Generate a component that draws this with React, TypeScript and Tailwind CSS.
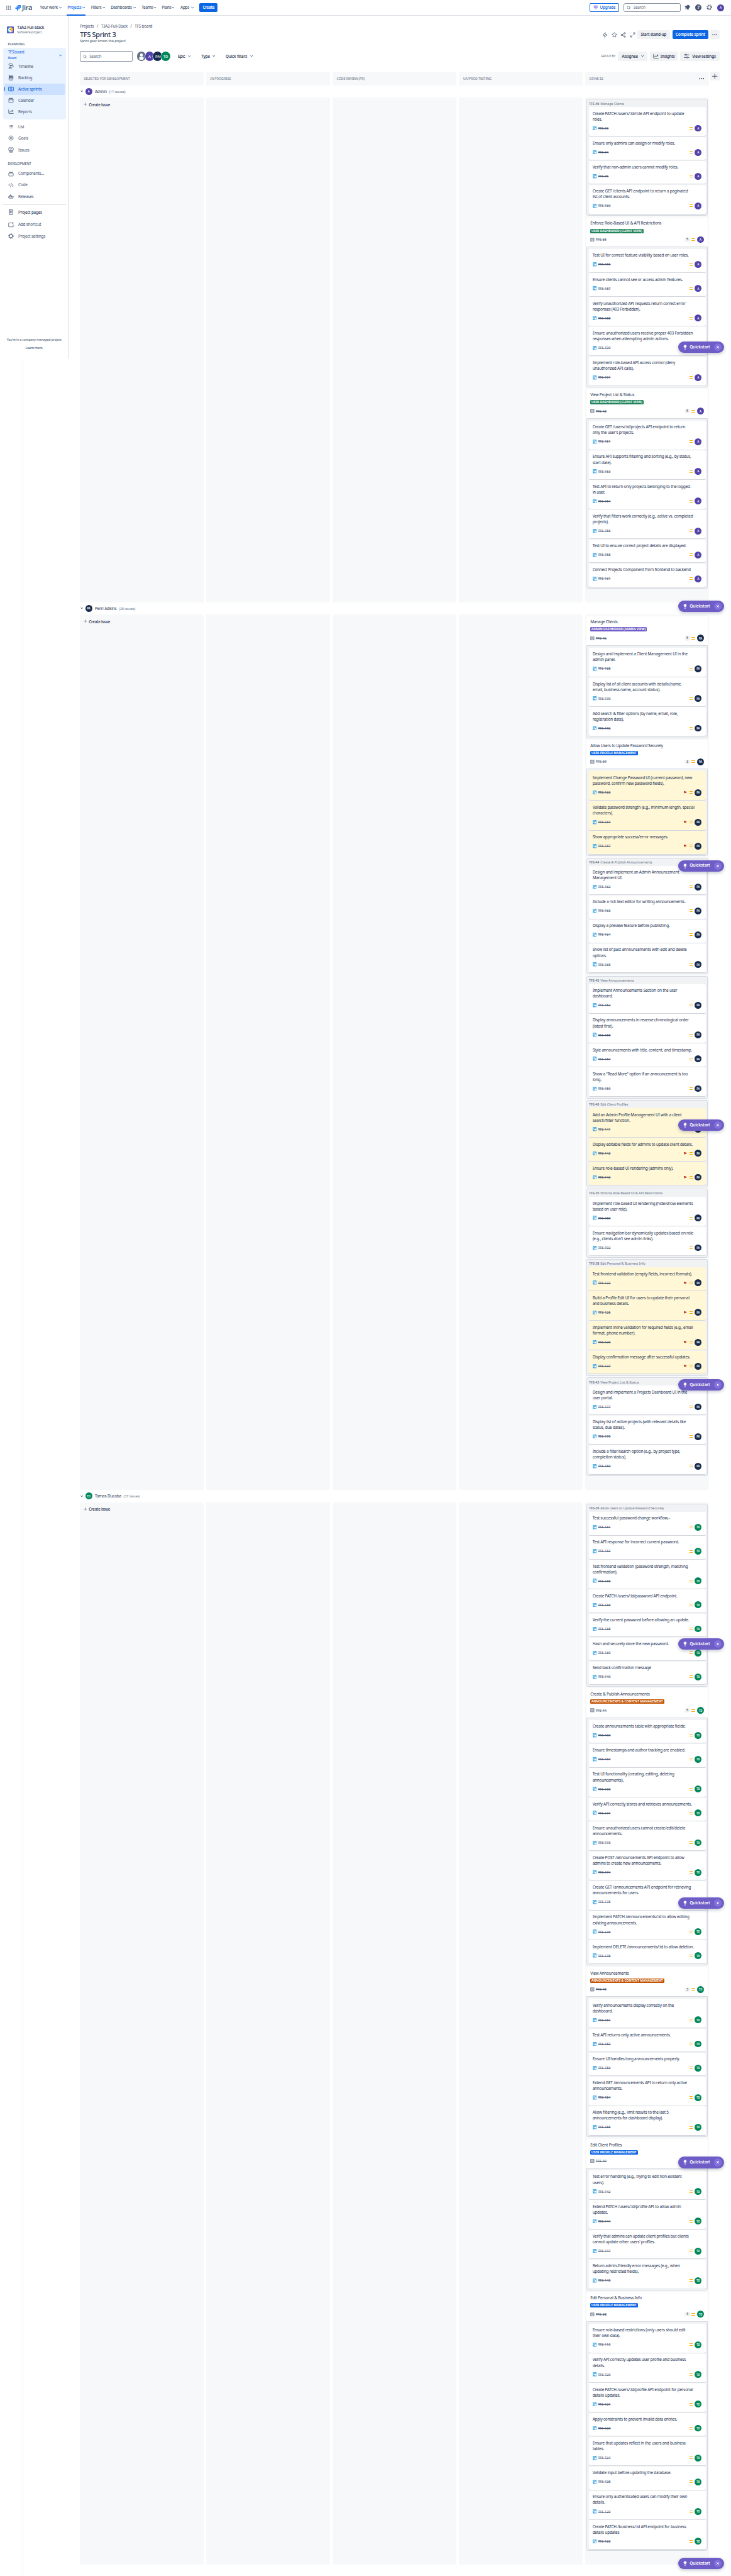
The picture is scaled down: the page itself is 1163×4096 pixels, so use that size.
import React from "react";
import { Bell, Calendar, Search, Star, Zap, Share2, Maximize2, Lightbulb } from "lucide-react";

type Person = "A" | "PA" | "TD";
type Item = [id: number, text: string];
type Group = {
  id: number;
  title: string;
  parent?: { badge: string; tone: "green" | "purple" | "blue" | "orange"; points: number };
  flagged?: boolean;
  items: Item[];
};

const adminGroups: Group[] = [
  {
    id: 46,
    title: "Manage Clients",
    items: [
      [93, "Create PATCH /users/:id/role API endpoint to update\nroles."],
      [94, "Ensure only admins can assign or modify roles."],
      [96, "Verify that non-admin users cannot modify roles."],
      [160, "Create GET /clients API endpoint to return a paginated\nlist of client accounts."],
    ],
  },
  {
    id: 35,
    title: "Enforce Role-Based UI & API Restrictions",
    parent: { badge: "USER DASHBOARD (CLIENT VIEW)", tone: "green", points: 5 },
    items: [
      [186, "Test UI for correct feature visibility based on user roles."],
      [187, "Ensure clients cannot see or access admin features."],
      [188, "Verify unauthorized API requests return correct error\nresponses (403 Forbidden)."],
      [190, "Ensure unauthorized users receive proper 403 Forbidden\nresponses when attempting admin actions."],
      [191, "Implement role-based API access control (deny\nunauthorized API calls)."],
    ],
  },
  {
    id: 43,
    title: "View Project List & Status",
    parent: { badge: "USER DASHBOARD (CLIENT VIEW)", tone: "green", points: 5 },
    items: [
      [151, "Create GET /users/:id/projects API endpoint to return\nonly the user's projects."],
      [153, "Ensure API supports filtering and sorting (e.g., by status,\nstart date)."],
      [154, "Test API to return only projects belonging to the logged-\nin user."],
      [156, "Verify that filters work correctly (e.g., active vs. completed\nprojects)."],
      [158, "Test UI to ensure correct project details are displayed."],
      [161, "Connect Projects Component from frontend to backend"],
    ],
  },
];

const paGroups: Group[] = [
  {
    id: 46,
    title: "Manage Clients",
    parent: { badge: "ADMIN DASHBOARD (ADMIN VIEW)", tone: "purple", points: 5 },
    items: [
      [168, "Design and implement a Client Management UI in the\nadmin panel."],
      [170, "Display list of all client accounts with details (name,\nemail, business name, account status)."],
      [172, "Add search & filter options (by name, email, role,\nregistration date)."],
    ],
  },
  {
    id: 39,
    title: "Allow Users to Update Password Securely",
    parent: { badge: "USER PROFILE MANAGEMENT", tone: "blue", points: 3 },
    flagged: true,
    items: [
      [133, "Implement Change Password UI (current password, new\npassword, confirm new password fields)."],
      [134, "Validate password strength (e.g., minimum length, special\ncharacters)."],
      [137, "Show appropriate success/error messages."],
    ],
  },
  {
    id: 44,
    title: "Create & Publish Announcements",
    items: [
      [162, "Design and implement an Admin Announcement\nManagement UI."],
      [163, "Include a rich text editor for writing announcements."],
      [164, "Display a preview feature before publishing."],
      [165, "Show list of past announcements with edit and delete\noptions."],
    ],
  },
  {
    id: 45,
    title: "View Announcements",
    items: [
      [152, "Implement Announcements Section on the user\ndashboard."],
      [155, "Display announcements in reverse chronological order\n(latest first)."],
      [157, "Style announcements with title, content, and timestamp."],
      [159, "Show a \"Read More\" option if an announcement is too\nlong."],
    ],
  },
  {
    id: 40,
    title: "Edit Client Profiles",
    flagged: true,
    items: [
      [141, "Add an Admin Profile Management UI with a client\nsearch/filter function."],
      [143, "Display editable fields for admins to update client details."],
      [146, "Ensure role-based UI rendering (admins only)."],
    ],
  },
  {
    id: 35,
    title: "Enforce Role-Based UI & API Restrictions",
    items: [
      [189, "Implement role-based UI rendering (hide/show elements\nbased on user role)."],
      [192, "Ensure navigation bar dynamically updates based on role\n(e.g., clients don't see admin links)."],
    ],
  },
  {
    id: 38,
    title: "Edit Personal & Business Info",
    flagged: true,
    items: [
      [122, "Test frontend validation (empty fields, incorrect formats)."],
      [125, "Build a Profile Edit UI for users to update their personal\nand business details."],
      [126, "Implement inline validation for required fields (e.g., email\nformat, phone number)."],
      [127, "Display confirmation message after successful updates."],
    ],
  },
  {
    id: 43,
    title: "View Project List & Status",
    items: [
      [177, "Design and implement a Projects Dashboard UI in the\nuser portal."],
      [179, "Display list of active projects (with relevant details like\nstatus, due dates)."],
      [180, "Include a filter/search option (e.g., by project type,\ncompletion status)."],
    ],
  },
];

const tdGroups: Group[] = [
  {
    id: 39,
    title: "Allow Users to Update Password Securely",
    items: [
      [131, "Test successful password change workflow.-"],
      [132, "Test API response for incorrect current password."],
      [135, "Test frontend validation (password strength, matching\nconfirmation)."],
      [136, "Create PATCH /users/:id/password API endpoint."],
      [138, "Verify the current password before allowing an update."],
      [139, "Hash and securely store the new password."],
      [140, "Send back confirmation message"],
    ],
  },
  {
    id: 44,
    title: "Create & Publish Announcements",
    parent: { badge: "ANNOUNCEMENTS & CONTENT MANAGEMENT", tone: "orange", points: 5 },
    items: [
      [166, "Create announcements table with appropriate fields:"],
      [167, "Ensure timestamps and author tracking are enabled."],
      [169, "Test UI functionality (creating, editing, deleting\nannouncements)."],
      [171, "Verify API correctly stores and retrieves announcements."],
      [173, "Ensure unauthorized users cannot create/edit/delete\nannouncements."],
      [174, "Create POST /announcements API endpoint to allow\nadmins to create new announcements."],
      [175, "Create GET /announcements API endpoint for retrieving\nannouncements for users."],
      [176, "Implement PATCH /announcements/:id to allow editing\nexisting announcements."],
      [178, "Implement DELETE /announcements/:id to allow deletion."],
    ],
  },
  {
    id: 45,
    title: "View Announcements",
    parent: { badge: "ANNOUNCEMENTS & CONTENT MANAGEMENT", tone: "orange", points: 3 },
    items: [
      [181, "Verify announcements display correctly on the\ndashboard."],
      [182, "Test API returns only active announcements."],
      [183, "Ensure UI handles long announcements properly."],
      [184, "Extend GET /announcements API to return only active\nannouncements."],
      [185, "Allow filtering (e.g., limit results to the last 5\nannouncements for dashboard display)."],
    ],
  },
  {
    id: 40,
    title: "Edit Client Profiles",
    parent: { badge: "USER PROFILE MANAGEMENT", tone: "blue", points: 3 },
    items: [
      [142, "Test error handling (e.g., trying to edit non-existent\nusers)."],
      [144, "Extend PATCH /users/:id/profile API to allow admin\nupdates."],
      [147, "Verify that admins can update client profiles but clients\ncannot update other users' profiles."],
      [149, "Return admin-friendly error messages (e.g., when\nupdating restricted fields)."],
    ],
  },
  {
    id: 38,
    title: "Edit Personal & Business Info",
    parent: { badge: "USER PROFILE MANAGEMENT", tone: "blue", points: 3 },
    items: [
      [119, "Ensure role-based restrictions (only users should edit\ntheir own data)."],
      [120, "Verify API correctly updates user profile and business\ndetails."],
      [121, "Create PATCH /users/:id/profile API endpoint for personal\ndetails updates."],
      [123, "Apply constraints to prevent invalid data entries."],
      [124, "Ensure that updates reflect in the users and business\ntables."],
      [128, "Validate input before updating the database."],
      [129, "Ensure only authenticated users can modify their own\ndetails."],
      [130, "Create PATCH /business/:id API endpoint for business\ndetails updates"],
    ],
  },
];

const personColor: Record<Person, string> = {
  A: "bg-[#5243aa]",
  PA: "bg-[#172b4d]",
  TD: "bg-[#00875a]",
};

const badgeColor = {
  green: "bg-[#1f845a]",
  purple: "bg-[#6e5dc6]",
  blue: "bg-[#0c66e4]",
  orange: "bg-[#c25100]",
};

function Avatar({ who }: { who: Person }) {
  return (
    <span
      className={`flex size-[10.9px] shrink-0 items-center justify-center rounded-full text-[4.3px] leading-none font-semibold text-white ${personColor[who]}`}
    >
      {who}
    </span>
  );
}

function Chevron({ className = "" }: { className?: string }) {
  return (
    <svg viewBox="0 0 8 8" className={`size-[4.4px] shrink-0 ${className}`} fill="none" stroke="currentColor" strokeWidth="1.8" strokeLinecap="round" strokeLinejoin="round">
      <path d="M1.2 2.6 4 5.3l2.8-2.7" />
    </svg>
  );
}

function Dots({ className = "" }: { className?: string }) {
  return (
    <svg viewBox="0 0 14 4" className={`h-[2.4px] w-[8.4px] ${className}`} fill="currentColor">
      <circle cx="2" cy="2" r="1.6" />
      <circle cx="7" cy="2" r="1.6" />
      <circle cx="12" cy="2" r="1.6" />
    </svg>
  );
}

function Priority() {
  return (
    <span className="flex w-[5.5px] flex-col gap-[2px]">
      <i className="h-[1px] bg-[#ffab00]" />
      <i className="h-[1px] bg-[#ffab00]" />
    </span>
  );
}

function SubtaskIcon() {
  return (
    <svg viewBox="0 0 16 16" className="size-[6.6px] shrink-0">
      <rect width="16" height="16" rx="2" fill="#4bade8" />
      <rect x="3.5" y="3.5" width="6" height="6" rx="1" fill="none" stroke="#fff" strokeWidth="1.3" />
      <rect x="7" y="7" width="6" height="6" rx="1" fill="#fff" />
    </svg>
  );
}

function StoryIcon() {
  return (
    <svg viewBox="0 0 16 16" className="size-[6.6px] shrink-0">
      <rect width="16" height="16" rx="2" fill="#97a0af" />
      <circle cx="8" cy="8" r="3.2" fill="none" stroke="#fff" strokeWidth="1.8" />
    </svg>
  );
}

function Card({ item, who, flagged }: { item: Item; who: Person; flagged?: boolean }) {
  const tall = item[1].includes("\n");
  return (
    <div
      className={`mb-[1.43px] rounded-[2px] px-[5.6px] pt-[5.4px] shadow-[0_0.6px_0.3px_#091e4240] ${tall ? "h-[45.8px]" : "h-[36.71px]"} ${flagged ? "bg-[#fff7d6]" : "bg-white"}`}
    >
      <p className="text-[6.36px] leading-[9.08px] tracking-[-0.03em] whitespace-pre text-[#172b4d]">{item[1]}</p>
      <div className="mt-[4.6px] flex h-[10.9px] items-center">
        <SubtaskIcon />
        <span className="ml-[2.2px] text-[5.45px] text-[#44546f] line-through decoration-[0.6px]">TFS-{item[0]}</span>
        <span className="ml-auto flex items-center">
          {flagged && (
            <svg viewBox="0 0 10 10" className="mr-[4.4px] size-[4.2px]" fill="#ca3521">
              <path d="M0 0h4.5v1.2H10L8.8 4 10 7H4.5V5.8H1.6V10H0z" />
            </svg>
          )}
          <Priority />
          <span className="mr-[0.8px] ml-[3.3px]">
            <Avatar who={who} />
          </span>
        </span>
      </div>
    </div>
  );
}

function IssueGroup({ group, who }: { group: Group; who: Person }) {
  const cards = group.items.map((item) => <Card key={item[0]} item={item} who={who} flagged={group.flagged} />);
  if (!group.parent) {
    return (
      <section className="mb-[2.54px] rounded-[3px] border border-[#d5d9e0] bg-[#f1f2f4] px-[2.7px] pb-[1px]">
        <h3 className="flex h-[12.02px] items-center gap-[1.8px] pt-[2px] text-[5.45px] leading-none tracking-[-0.02em] whitespace-pre text-[#626f86]">
          <b className="font-semibold">TFS-{group.id}</b>
          <span>{group.title}</span>
        </h3>
        {cards}
      </section>
    );
  }
  const { badge, tone, points } = group.parent;
  return (
    <section className="mb-[2.54px]">
      <header className="h-[46.2px] rounded-t-[2px] bg-white px-[5.8px] pt-[4.8px]">
        <h3 className="text-[6.36px] leading-[9.1px] tracking-[-0.03em] text-[#172b4d]">{group.title}</h3>
        <div className="mt-[4px] flex">
          <span className={`-ml-[0.3px] flex h-[7px] items-center rounded-[1.5px] px-[2px] text-[5px] leading-none font-bold tracking-[-0.005em] whitespace-nowrap text-white ${badgeColor[tone]}`}>
            {badge}
          </span>
        </div>
        <div className="mt-[5px] flex h-[10.9px] items-center">
          <StoryIcon />
          <span className="ml-[2.2px] text-[5.45px] text-[#44546f] line-through decoration-[0.6px]">TFS-{group.id}</span>
          <span className="ml-auto flex h-[7.3px] w-[8.5px] items-center justify-center rounded-full bg-[#f1f2f4] text-[5.45px] leading-none text-[#172b4d]">
            {points}
          </span>
          <span className="ml-[2.6px]">
            <Priority />
          </span>
          <span className="mr-[0.6px] ml-[3.3px]">
            <Avatar who={who} />
          </span>
        </div>
      </header>
      <div className="rounded-b-[3px] border border-[#d5d9e0] bg-[#f1f2f4] px-[2.7px] pt-[3.2px] pb-[1px]">{cards}</div>
    </section>
  );
}

function Lane({ who, name, count, groups, height }: { who: Person; name: string; count: number; groups: Group[]; height: string }) {
  return (
    <section>
      <header className="flex h-[19.35px] items-center pl-[1.5px]">
        <Chevron className="text-[#44546f]" />
        <span className="ml-[3.2px]">
          <Avatar who={who} />
        </span>
        <span className="ml-[4.4px] text-[6.36px] tracking-[-0.02em] text-[#172b4d]">{name}</span>
        <span className="ml-[3.7px] pt-[1px] text-[5.45px] tracking-[-0.01em] text-[#626f86]">({count} issues)</span>
      </header>
      <div className={`grid grid-cols-5 gap-[3.7px] ${height}`}>
        <div className="rounded-[2px] bg-[#f7f8f9] pt-[6.5px] pl-[6.6px]">
          <button className="flex items-center text-[6.36px] leading-[9px] font-medium tracking-[-0.04em] text-[#172b4d]">
            <svg viewBox="0 0 10 10" className="mr-[2.6px] size-[5.4px]" stroke="#44546f" strokeWidth="1.2">
              <path d="M5 .5v9M.5 5h9" />
            </svg>
            Create issue
          </button>
        </div>
        <div className="rounded-[2px] bg-[#f7f8f9]" />
        <div className="rounded-[2px] bg-[#f7f8f9]" />
        <div className="rounded-[2px] bg-[#f7f8f9]" />
        <div className="rounded-[2px] bg-[#f7f8f9] pt-[2.4px] pr-[2px] pl-[2.4px]">
          {groups.map((g) => (
            <IssueGroup key={g.id} group={g} who={who} />
          ))}
        </div>
      </div>
    </section>
  );
}

const svgLine = { fill: "none", stroke: "currentColor", strokeWidth: 2, strokeLinecap: "round" as const, strokeLinejoin: "round" as const };

function Icon({ name, className = "size-[9px]" }: { name: string; className?: string }) {
  const shapes: Record<string, React.ReactNode> = {
    timeline: (
      <>
        <rect x="3" y="1.5" width="15" height="5.500" rx="2" />
        <rect x="8" y="9.2" width="14" height="5.500" rx="2" />
        <rect x="3" y="17" width="11" height="5.500" rx="2" />
      </>
    ),
    backlog: (
      <>
        <rect x="3.5" y="2" width="16" height="5" rx="1.5" />
        <rect x="3.5" y="7" width="18" height="5" rx="1.5" />
        <rect x="3.5" y="12" width="17" height="5" rx="1.5" />
        <rect x="3.5" y="17" width="16" height="5" rx="1.5" />
      </>
    ),
    board: (
      <>
        <rect x="1.5" y="3.5" width="21" height="17" rx="2" />
        <path d="M8.7 4v16M15.3 4v16" />
      </>
    ),
    reports: <path d="M2 4v14a2 2 0 0 0 2 2h18M6 15l4-5 4 4 6-7m-4-.5h4.5V11" />,
    list: <path d="M5 7h.5M10 7h9M5 12h.5M10 12h9M5 17h.5M10 17h9" />,
    goals: (
      <>
        <circle cx="12" cy="12" r="9.5" />
        <circle cx="12" cy="12" r="3.5" />
      </>
    ),
    issues: (
      <>
        <rect x="2.5" y="2.5" width="19" height="12" rx="1.5" />
        <path d="m9 8 2 2 4-4M4 18h16M6 21.5h12" />
      </>
    ),
    components: (
      <>
        <rect x="2.5" y="8" width="19" height="13" rx="1.5" />
        <path d="M5 8V4h5v4m4 0V4h5v4" />
      </>
    ),
    code: <path d="m7 6-5 5 5 4m10-6 5 5-5 4M14 4l-4 16" />,
    releases: <path d="M2 13h14l2-2h4l-2 8H4zM5 13V9h10v4M8 9V5h4v4" />,
    pages: (
      <>
        <rect x="4" y="2" width="16" height="20" rx="1.5" />
        <path d="M8 7h8M8 11h8M8 15h4" />
      </>
    ),
    shortcut: <path d="M13 3.500H3.500A1.500 1.500 0 0 0 2 5v15.500h19.500V12M19 1.500v6m-3-3h6" />,
    gear: (
      <>
        <circle cx="12" cy="12" r="6.8" strokeWidth="2.4" />
        <circle cx="12" cy="12" r="9.6" strokeWidth="3.2" strokeLinecap="butt" strokeDasharray="3.5 4.04" />
      </>
    ),
  };
  return (
    <svg viewBox="0 0 24 24" className={`shrink-0 ${className}`} {...svgLine}>
      {shapes[name]}
    </svg>
  );
}

function SideItem({ icon, label, dark }: { icon: React.ReactNode; label: string; dark?: boolean }) {
  return (
    <div className={`flex h-[18.15px] items-center gap-[6.6px] pl-[13.4px] text-[6.36px] tracking-[-0.03em] ${dark ? "text-[#172b4d]" : "text-[#44546f]"}`}>
      {icon}
      {label}
    </div>
  );
}

function Sidebar() {
  return (
    <aside className="h-[544.6px] w-[110.2px] border-r-2 border-[#ebecf0] text-[#44546f]">
      <div className="flex items-center pt-[14.2px] pl-[10.9px]">
        <svg viewBox="0 0 24 24" className="size-[11px]">
          <rect width="24" height="24" rx="2.5" fill="#6554c0" />
          <circle cx="12" cy="12" r="8.5" fill="#fff" />
          <path d="M12 3.5a8.5 8.5 0 0 0 0 17" fill="none" stroke="#00b8d9" strokeWidth="2.5" />
          <path d="M12 3.5c6 0 9.5 4.5 9.5 9.5H15l-3-2z" fill="#ffc400" />
          <path d="m14 13 6 0-6 7z" fill="#ff991f" />
          <circle cx="11" cy="10.5" r="1.7" fill="#172b4d" />
        </svg>
        <div className="ml-[5.4px]">
          <div className="text-[6.36px] leading-[8px] font-medium tracking-[-0.035em] text-[#172b4d]">T3A2-Full-Stack</div>
          <div className="text-[5.45px] leading-[7.5px] tracking-[-0.03em] text-[#626f86]">Software project</div>
        </div>
      </div>
      <div className="mt-[12px] pl-[12.4px] text-[5.3px] leading-[7px] font-medium tracking-[-0.02em]">PLANNING</div>
      <div className="mt-[2.2px] ml-[4.8px] h-[114.2px] w-[100px] rounded-[4px] bg-[#e9f2ff] pt-[3.2px]">
        <div className="flex items-center justify-between pr-[6.7px] pl-[8px] tracking-[-0.03em] text-[#0c66e4]">
          <div>
            <div className="text-[6.36px] leading-[8.5px]">TFS board</div>
            <div className="text-[5.45px] leading-[8.4px]">Board</div>
          </div>
          <Chevron />
        </div>
        <div className="-ml-[4.8px]">
          <SideItem icon={<Icon name="timeline" />} label="Timeline" />
          <SideItem icon={<Icon name="backlog" />} label="Backlog" />
        </div>
        <div className="ml-[1.9px] flex h-[18.15px] w-[96.3px] items-center rounded-[2px] bg-[#cce0ff] text-[6.36px] tracking-[-0.03em] text-[#0055cc]">
          <span className="h-[7.3px] w-[1.6px] rounded-r-[1px] bg-[#0c66e4]" />
          <span className="ml-[5.1px] flex items-center gap-[6.6px]">
            <Icon name="board" />
            Active sprints
          </span>
        </div>
        <div className="-ml-[4.8px]">
          <SideItem icon={<Calendar className="size-[9px]" strokeWidth={2} />} label="Calendar" />
          <SideItem icon={<Icon name="reports" />} label="Reports" />
        </div>
      </div>
      <div className="mt-[2px]">
        <SideItem icon={<Icon name="list" />} label="List" />
        <SideItem icon={<Icon name="goals" />} label="Goals" />
        <div className="h-[0.8px]" />
        <SideItem icon={<Icon name="issues" />} label="Issues" />
      </div>
      <div className="mt-[9.5px] pl-[12.4px] text-[5.3px] leading-[7px] font-medium tracking-[-0.02em]">DEVELOPMENT</div>
      <div className="mt-[2.8px]">
        <SideItem icon={<Icon name="components" />} label="Components..." />
        <SideItem icon={<Icon name="code" />} label="Code" />
        <SideItem icon={<Icon name="releases" />} label="Releases" />
      </div>
      <div className="mx-[3.6px] mt-[3.5px] h-px bg-[#dcdfe4]" />
      <div className="mt-[2.8px]">
        <SideItem icon={<Icon name="pages" />} label="Project pages" dark />
        <div className="h-[1.15px]" />
        <SideItem icon={<Icon name="shortcut" />} label="Add shortcut" />
        <div className="h-[0.6px]" />
        <SideItem icon={<Icon name="gear" />} label="Project settings" />
      </div>
      <div className="mt-[149px] text-center text-[5.2px] leading-[12.7px] tracking-[-0.03em] whitespace-nowrap">
        <p>You're in a company-managed project</p>
        <p className="font-medium">Learn more</p>
      </div>
    </aside>
  );
}

const navItems: [string, string][] = [
  ["Your work", "w-[43.6px]"],
  ["Projects", "w-[37.6px]"],
  ["Filters", "w-[31.5px]"],
  ["Dashboards", "w-[49px]"],
  ["Teams", "w-[32.1px]"],
  ["Plans", "w-[29.7px]"],
  ["Apps", "w-[30.3px]"],
];

function TopBar() {
  return (
    <header className="flex h-[25.4px] items-center border-b border-[#dcdfe4] text-[#44546f]">
      <svg viewBox="0 0 12 12" className="ml-[10.4px] size-[7.3px]" fill="currentColor">
        {[0, 4.7, 9.4].map((y) => [0, 4.7, 9.4].map((x) => <rect key={`${x}-${y}`} x={x} y={y} width="2.6" height="2.6" rx="0.6" />))}
      </svg>
      <svg viewBox="0 0 24 24" className="ml-[5.9px] size-[9.2px]">
        <path d="M11 0h13v13a5 5 0 0 1-5-5V5h-3a5 5 0 0 1-5-5z" fill="#2684ff" />
        <path d="M5.5 5.7h13v13a5 5 0 0 1-5-5v-3h-3a5 5 0 0 1-5-5z" fill="#2476ec" />
        <path d="M0 11.3h13v13a5 5 0 0 1-5-5v-3H5a5 5 0 0 1-5-5z" fill="#2684ff" />
      </svg>
      <span className="ml-[2.3px] w-[28.5px] text-[11.4px] leading-none font-medium tracking-[-0.03em] text-[#344563]">Jira</span>
      <nav className="flex h-full text-[6.36px] font-medium tracking-[-0.045em]">
        {navItems.map(([label, width]) => (
          <div key={label} className={`relative flex items-center justify-between pr-[9.2px] whitespace-nowrap ${width} ${label === "Projects" ? "text-[#0c66e4]" : ""}`}>
            {label}
            <Chevron />
            {label === "Projects" && <span className="absolute -bottom-px -left-[1.3px] h-[2px] w-[30.3px] bg-[#0c66e4]" />}
          </div>
        ))}
      </nav>
      <button className="h-[14.5px] w-[28.9px] rounded-[2px] bg-[#0c66e4] text-[6.36px] leading-none font-semibold tracking-[-0.045em] text-white">Create</button>
      <div className="mr-[10.9px] ml-auto flex items-center">
        <button className="flex h-[14.5px] w-[47.6px] items-center justify-center gap-[3.3px] rounded-[2px] border border-[#0c66e4] text-[6.36px] font-medium tracking-[-0.04em] text-[#0c66e4]">
          <svg viewBox="0 0 14 14" className="size-[7.6px]">
            <path d="M3 1h8l3 4-7 8-7-8z" fill="#8f7ee7" />
            <path d="M0 5h14M4.5 5 7 12l2.5-7L8.5 1h-3z" fill="none" stroke="#fff" strokeWidth="0.8" />
          </svg>
          Upgrade
        </button>
        <div className="ml-[7.3px] flex h-[14.5px] w-[90.9px] items-center gap-[4.3px] rounded-[3px] border border-[#8590a2] pl-[3.4px] text-[6.36px] tracking-[-0.03em] text-[#626f86]">
          <Search className="size-[6.5px]" strokeWidth={2.4} />
          Search
        </div>
        <Bell className="ml-[5.8px] size-[9.4px] rotate-45" fill="currentColor" strokeWidth={2} />
        <span className="ml-[7.3px] flex size-[10.4px] items-center justify-center rounded-full bg-[#44546f] text-[7.8px] leading-none font-bold text-white">?</span>
        <Icon name="gear" className="ml-[7.6px] size-[9.4px]" />
        <span className="ml-[8px]">
          <Avatar who="A" />
        </span>
      </div>
    </header>
  );
}

function FilterButton({ label, className }: { label: string; className: string }) {
  return (
    <span className={`flex items-center justify-between whitespace-nowrap ${className}`}>
      {label}
      <Chevron className="text-[#44546f]" />
    </span>
  );
}

function BoardHeader() {
  const grey = "flex h-[14.5px] items-center justify-center rounded-[2px] bg-[#f1f2f4] font-medium text-[#172b4d]";
  return (
    <div className="h-[88.4px] pr-[18.1px] pl-[0.6px] text-[6.36px] tracking-[-0.032em]">
      <div className="flex gap-[4.6px] pt-[12px] leading-[9.1px] text-[#44546f]">
        <span>Projects</span>
        <span>/</span>
        <span>T3A2-Full-Stack</span>
        <span>/</span>
        <span>TFS board</span>
      </div>
      <div className="mt-[1.3px] flex h-[14.5px] items-center">
        <h1 className="text-[10.9px] leading-none font-medium tracking-[-0.03em] text-[#172b4d]">TFS Sprint 3</h1>
        <div className="ml-auto flex items-center text-[#44546f]">
          <Zap className="size-[9px]" strokeWidth={2.2} />
          <Star className="ml-[5.5px] size-[9px]" strokeWidth={2.2} />
          <Share2 className="ml-[5.5px] size-[9px]" strokeWidth={2.2} />
          <Maximize2 className="ml-[5.5px] size-[9px]" strokeWidth={2.2} />
          <button className={`ml-[3px] w-[52.6px] ${grey}`}>Start stand-up</button>
          <button className="ml-[3.7px] h-[14.5px] w-[56.9px] rounded-[2px] bg-[#0c66e4] leading-none font-semibold text-white">Complete sprint</button>
          <button className={`ml-[3.7px] w-[14.5px] ${grey}`}>
            <Dots className="text-[#44546f]" />
          </button>
        </div>
      </div>
      <p className="text-[5.45px] leading-[7.6px] text-[#44546f]">Sprint goal: Smash this project!</p>
      <div className="mt-[11.6px] flex h-[16.4px] items-center font-medium text-[#172b4d]">
        <div className="flex h-[16.4px] w-[83.8px] items-center gap-[4px] rounded-[2px] border border-[#8590a2] pl-[3.9px] font-normal text-[#626f86]">
          <Search className="size-[6.2px]" strokeWidth={2.4} />
          Search
        </div>
        <div className="ml-[6.9px] flex text-[6px] leading-none tracking-normal text-white">
          <span className="flex size-[14.5px] items-center justify-center rounded-full bg-[#626f86]">
            <svg viewBox="0 0 24 24" className="size-[14px]" fill="#fff">
              <circle cx="12" cy="7.5" r="4" />
              <rect x="6" y="12.5" width="12" height="8" rx="2.5" />
            </svg>
          </span>
          <span className="-ml-[1.7px] flex size-[14.5px] items-center justify-center rounded-full bg-[#5243aa] ring-[0.6px] ring-white">A</span>
          <span className="-ml-[1.7px] flex size-[14.5px] items-center justify-center rounded-full bg-[#172b4d] ring-[0.6px] ring-white">PA</span>
          <span className="-ml-[1.7px] flex size-[14.5px] items-center justify-center rounded-full bg-[#00875a] ring-[0.6px] ring-white">TD</span>
        </div>
        <FilterButton label="Epic" className="ml-[12.2px] w-[37.3px] pr-[16.7px]" />
        <FilterButton label="Type" className="w-[38.8px] pr-[16.3px]" />
        <FilterButton label="Quick filters" className="w-[53.5px] pr-[9.8px]" />
        <span className="ml-auto text-[5px] font-normal text-[#626f86]">GROUP BY</span>
        <button className={`ml-[4px] w-[47.3px] gap-[5px] ${grey}`}>
          Assignee <Chevron className="text-[#44546f]" />
        </button>
        <button className={`ml-[3.7px] w-[44.2px] gap-[3px] ${grey}`}>
          <Icon name="reports" /> Insights
        </button>
        <button className={`ml-[3.7px] w-[62.9px] gap-[4.5px] ${grey}`}>
          <svg viewBox="0 0 24 24" className="size-[8.5px]" {...svgLine}>
            <path d="M1 6h4m8 0h10M1 18h10m8 0h4" />
            <circle cx="9" cy="6" r="3" />
            <circle cx="15" cy="18" r="3" />
          </svg>
          View settings
        </button>
      </div>
    </div>
  );
}

const quickstarts = [543.3, 955.3, 1367.7, 1780.1, 2193, 2605, 3017, 3429.4, 4067.2];

function Quickstart({ top }: { top: number }) {
  return (
    <div
      className="absolute right-[10.9px] flex h-[18.2px] w-[73.3px] items-center rounded-full bg-[#6e5dc6] text-white shadow-[0_2px_5px_#091e4240]"
      style={{ top }}
    >
      <Lightbulb className="ml-[6.7px] size-[8px]" fill="currentColor" strokeWidth={2} />
      <span className="ml-[3.7px] text-[6.6px] leading-none font-semibold tracking-[-0.02em]">Quickstart</span>
      <span className="mr-[4.2px] ml-auto flex size-[12.1px] items-center justify-center rounded-full bg-[#8270db]">
        <svg viewBox="0 0 8 8" className="size-[4px]" stroke="#fff" strokeWidth="2" strokeLinecap="round">
          <path d="m1 1 6 6m0-6L1 7" />
        </svg>
      </span>
    </div>
  );
}

const columnTitles = ["SELECTED FOR DEVELOPMENT", "IN PROGRESS", "CODE REVIEW (PR)", "UA/PROD TESTING", "DONE 82"];

export default function App() {
  return (
    <div className="relative h-[4096px] w-[1163px] overflow-hidden bg-white font-['Noto_Sans','Open_Sans',sans-serif] text-[#172b4d]">
      <TopBar />
      <div className="flex h-[4070.6px]">
        <div className="flex w-[110.2px] shrink-0 flex-col">
          <Sidebar />
          <div className="w-[37px] flex-1 border-r border-[#ebecf0]" />
        </div>
        <main className="flex-1 pl-[16.4px]">
          <BoardHeader />
          <div className="flex">
            <div className="w-[1001.8px]">
              <div className="grid h-[21.9px] grid-cols-5 gap-[3.7px] text-[5.45px] tracking-[-0.03em] text-[#626f86]">
                {columnTitles.map((t, i) => (
                  <div key={t} className="flex items-center rounded-t-[3px] bg-[#f7f8f9] pl-[6.8px]">
                    {t}
                    {i === 4 && <Dots className="mr-[8px] ml-auto text-[#172b4d]" />}
                  </div>
                ))}
              </div>
              <Lane who="A" name="Admin" count={17} groups={adminGroups} height="h-[802.8px]" />
              <Lane who="PA" name="Perri Adkins" count={28} groups={paGroups} height="h-[1392px]" />
              <Lane who="TD" name="Tamas Ducaba" count={37} groups={tdGroups} height="h-[1689.6px]" />
            </div>
            <button className="ml-[1.8px] flex size-[14.5px] items-center justify-center rounded-[2px] bg-[#f1f2f4]">
              <svg viewBox="0 0 14 14" className="size-[8.5px]" stroke="#44546f" strokeWidth="1.8" strokeLinecap="round">
                <path d="M7 1v12M1 7h12" />
              </svg>
            </button>
          </div>
        </main>
      </div>
      {quickstarts.map((top) => (
        <Quickstart key={top} top={top} />
      ))}
    </div>
  );
}
